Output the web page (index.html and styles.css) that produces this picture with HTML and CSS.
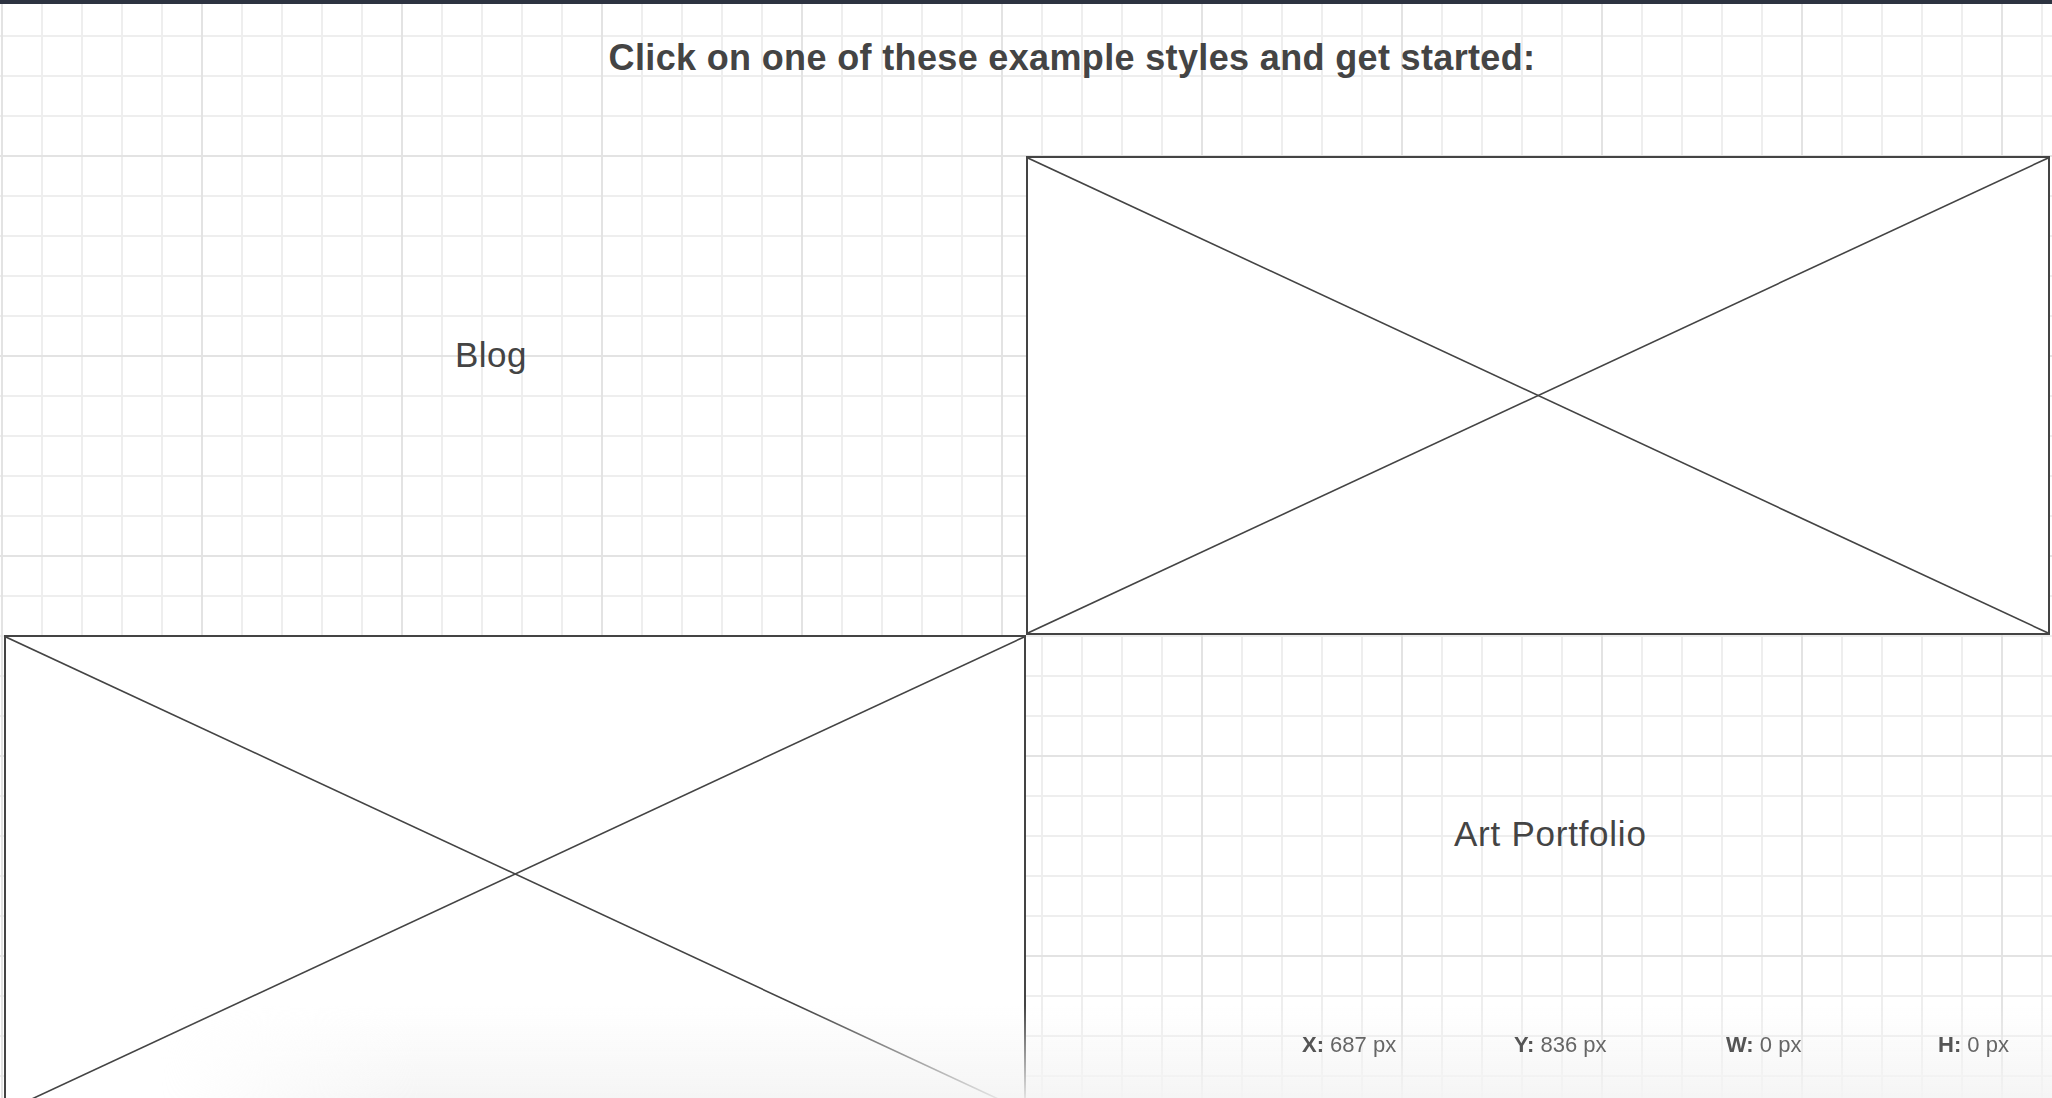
FILE: index.html
```html
<!DOCTYPE html>
<html>
<head>
<title>Site Builder</title>
<link rel="stylesheet" href="styles.css">
</head>

<body>
  <div class="top-bar"></div>
  <p class="title">Click on one of these example styles and get started:</p>

  <div class="styles-grid">
    <div class="cell">
      <p class="label label-blog">Blog</p>
    </div>
    <div class="placeholder">
      <svg class="x-lines" viewBox="0 0 100 100" preserveAspectRatio="none">
        <line x1="0" y1="0" x2="100" y2="100" vector-effect="non-scaling-stroke"/>
        <line x1="0" y1="100" x2="100" y2="0" vector-effect="non-scaling-stroke"/>
      </svg>
    </div>
    <div class="placeholder">
      <svg class="x-lines" viewBox="0 0 100 100" preserveAspectRatio="none">
        <line x1="0" y1="0" x2="100" y2="100" vector-effect="non-scaling-stroke"/>
        <line x1="0" y1="100" x2="100" y2="0" vector-effect="non-scaling-stroke"/>
      </svg>
    </div>
    <div class="cell">
      <p class="label label-art">Art Portfolio</p>
    </div>
  </div>

  <div class="status-bar">
    <span class="status-item"><b>X:</b> 687 px</span>
    <span class="status-item"><b>Y:</b> 836 px</span>
    <span class="status-item"><b>W:</b> 0 px</span>
    <span class="status-item"><b>H:</b> 0 px</span>
  </div>
</body>

</html>
```

FILE: styles.css
```css
html, body{
  margin: 0;
  height: 100%;
}
body{
  font-family: "Liberation Sans", Arial, sans-serif;
  color: #444;
  overflow: hidden;
  position: relative;
  background-color: #fff;
  background-image:
    linear-gradient(to right, #e3e3e3 2px, transparent 2px),
    linear-gradient(to bottom, #e3e3e3 2px, transparent 2px),
    linear-gradient(to right, #eeeeee 2px, transparent 2px),
    linear-gradient(to bottom, #eeeeee 2px, transparent 2px);
  background-size: 200px 200px, 200px 200px, 40px 40px, 40px 40px;
  background-position: 1px 0, 0 155px, 1px 0, 0 35px;
}
.top-bar{
  height: 4px;
  background-color: #2d3341;
}
.title{
  margin: 34px 0 0 0;
  padding-left: 92px;
  font-size: 36px;
  line-height: 40px;
  font-weight: bold;
  text-align: center;
  letter-spacing: 0.35px;
}
.styles-grid{
  display: grid;
  grid-template-columns: 1022px 1024px;
  grid-template-rows: 479px 478px;
  margin-top: 78px;
  padding-left: 4px;
}
.cell{
  padding-top: 179px;
}
.label{
  margin: 0;
  font-size: 35px;
  line-height: 40px;
  letter-spacing: 0.5px;
}
.label-blog{
  padding-left: 451px;
}
.label-art{
  padding-left: 428px;
  letter-spacing: 0.75px;
}
.placeholder{
  box-sizing: border-box;
  border: 2px solid #444;
  background-color: #fff;
}
.x-lines{
  display: block;
  width: 100%;
  height: 100%;
}
.x-lines line{
  stroke: #444;
  stroke-width: 1.6;
}
.status-bar{
  position: absolute;
  left: 160px;
  right: 0;
  bottom: 0;
  height: 93px;
  padding: 28px 0 0 1142px;
  box-sizing: border-box;
  display: flex;
  background: linear-gradient(to bottom, rgba(250, 250, 250, 0), rgba(244, 244, 244, 0.9));
  -webkit-mask-image: linear-gradient(to right, transparent, black 260px);
  mask-image: linear-gradient(to right, transparent, black 260px);
  font-size: 22px;
  line-height: 24px;
  color: #666;
}
.status-item{
  width: 212px;
  flex-shrink: 0;
}
.status-item b{
  color: #555;
}
```
